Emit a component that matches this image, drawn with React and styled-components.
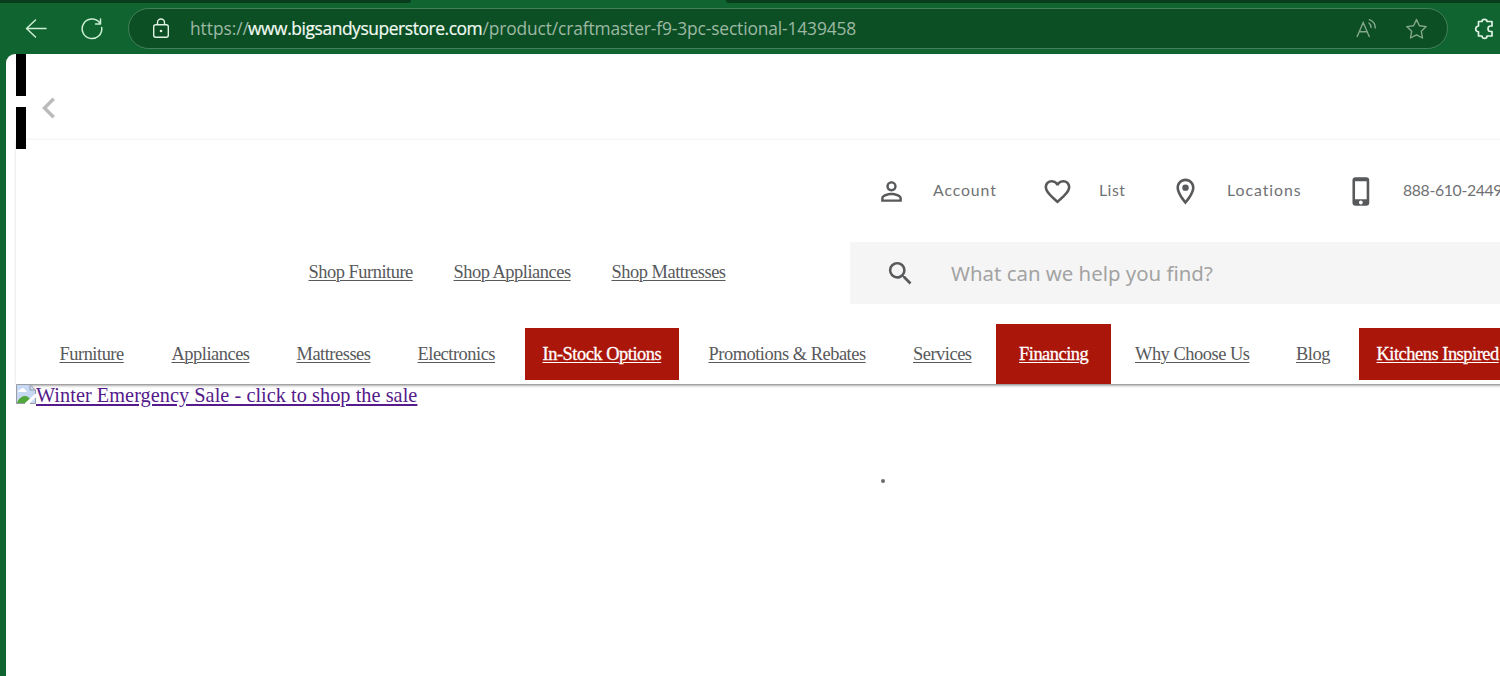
import React from "react";
import styled, { createGlobalStyle } from "styled-components";
import {
  MdChevronLeft,
  MdFavoriteBorder,
  MdOutlineLocationOn,
  MdPersonOutline,
  MdPhoneIphone,
  MdSearch,
} from "react-icons/md";

const GlobalStyle = createGlobalStyle`
  * {
    box-sizing: border-box;
  }
  body {
    margin: 0;
    overflow: hidden;
  }
`;

const Browser = styled.div`
  width: 1500px;
  height: 676px;
  display: flex;
  flex-direction: column;
  overflow: hidden;
  background-color: #0f6430;
`;

const TabStrip = styled.div`
  display: flex;
  justify-content: space-between;
  height: 3px;
  flex: none;
`;
const InactiveTabs = styled.div`
  width: ${({ $width }) => $width}px;
  background-color: #083d1c;
  border-radius: ${({ $right }) => ($right ? "0 0 0 3px" : "0 0 3px 0")};
`;

const Toolbar = styled.div`
  display: flex;
  align-items: center;
  height: 51px;
  flex: none;
  padding-left: 24px;
  color: #cdeed5;
  svg {
    flex: none;
    display: block;
  }
`;
const BackIcon = styled.svg`
  margin-right: 32px;
`;
const ReloadIcon = styled.svg`
  margin-right: 24px;
`;
const AddressBar = styled.div`
  display: flex;
  align-items: center;
  width: 1320px;
  height: 41px;
  flex: none;
  margin-right: 26px;
  padding: 0 19px 0 22px;
  border: 1px solid #44805a;
  border-radius: 21px;
  background-color: #0c4f25;
`;
const Url = styled.div`
  flex: 1;
  display: flex;
  margin: 0 0 2px 19px;
  font-family: "Open Sans", "Noto Sans", sans-serif;
  font-size: 17.4px;
  line-height: 24px;
  color: #9db8a3;
  white-space: pre;
`;
const UrlPart = styled.span`
  width: ${({ $width }) => $width}px;
  letter-spacing: ${({ $spacing }) => $spacing}px;
`;
const Domain = styled(UrlPart)`
  color: #f2fbf3;
  -webkit-text-stroke: 0.2px #f2fbf3;
`;
const ReadAloudIcon = styled.svg`
  margin-right: 28px;
`;

const Page = styled.div`
  flex: 1;
  margin-left: 6px;
  padding-left: 10px;
  border-top-left-radius: 9px;
  background-color: #fff;
`;
const Carousel = styled.div`
  display: flex;
  height: 86px;
`;
const Bars = styled.div`
  position: relative;
  z-index: 1;
  display: flex;
  flex-direction: column;
  gap: 11px;
`;
const Bar = styled.div`
  width: 10px;
  height: 42px;
  flex: none;
  background-color: #000;
`;
const PrevIcon = styled(MdChevronLeft)`
  margin: 33px 0 0 2px;
  color: #bbb;
`;

const SiteHeader = styled.header`
  position: relative;
  width: 1500px;
  height: 244px;
  box-shadow: 0 0 3px rgba(0, 0, 0, 0.1), 0 3px 3px -2px rgba(0, 0, 0, 0.55);
  background-color: #fff;
  color: #58595b;
`;
const AccountLinks = styled.div`
  display: flex;
  align-items: center;
  height: 102px;
  padding-left: 860px;
  svg {
    flex: none;
  }
`;
const AccountText = styled.span`
  width: ${({ $width }) => $width}px;
  margin: 0 ${({ $after }) => $after}px 3px ${({ $before }) => $before}px;
  font-family: "Lato", sans-serif;
  font-size: 15.8px;
  line-height: 20px;
  letter-spacing: ${({ $spacing }) => $spacing}px;
  color: #707174;
  white-space: nowrap;
`;

const ShopRow = styled.div`
  display: flex;
  height: 62px;
  align-items: center;
`;
const MenuRow = styled.nav`
  display: flex;
  height: 60px;
  margin-top: 20px;
  align-items: center;
`;
const NavLink = styled.a`
  flex: none;
  width: ${({ $width }) => $width}px;
  margin-left: ${({ $before }) => $before}px;
  font-family: "Liberation Serif", serif;
  font-size: 18.4px;
  line-height: 22px;
  letter-spacing: -0.47px;
  color: #58595b;
  text-decoration: underline;
  text-underline-offset: 2px;
  text-decoration-thickness: 1px;
  white-space: nowrap;
`;
const ShopLink = styled(NavLink)`
  margin-bottom: 2px;
`;
const Promo = styled.div`
  display: flex;
  align-items: center;
  flex: none;
  width: ${({ $width }) => $width}px;
  height: ${({ $tall }) => ($tall ? 60 : 52)}px;
  margin-left: ${({ $before }) => $before}px;
  padding-left: ${({ $pad }) => $pad}px;
  background-color: #ab160b;
  ${NavLink} {
    color: #fff;
    -webkit-text-stroke: 0.3px #fff;
  }
`;
const SearchBox = styled.div`
  display: flex;
  align-items: center;
  flex: none;
  width: 700px;
  height: 62px;
  margin-left: 124px;
  padding-left: 35px;
  background-color: #f5f5f5;
`;
const Placeholder = styled.span`
  margin: 0 0 1px 35px;
  font-family: "Noto Sans", sans-serif;
  font-size: 20.4px;
  line-height: 28px;
  color: #a3a3a3;
  white-space: nowrap;
`;

const Banner = styled.a`
  display: flex;
  height: 22px;
  font-family: "Liberation Serif", serif;
  font-size: 20.3px;
  line-height: 23px;
  letter-spacing: 0.04px;
  color: #551a8b;
  text-decoration: underline;
  white-space: nowrap;
  svg {
    position: relative;
  }
`;
const LoadingDot = styled.div`
  width: 4px;
  height: 4px;
  margin: 73px 0 0 865px;
  border-radius: 50%;
  background-color: #6b6b6b;
`;

const BrokenImage = () => (
  <svg width="20" height="20" viewBox="0 0 20 20" fill="none">
    <path d="M.5 .5H14L19.5 6V19.5H.5z" fill="#c7d8f5" />
    <path d="M2 8c0-2 2-2 3-3 1-2 4-1 4 1 2 0 2 2 1 2z" fill="#fff" />
    <path d="M1 19c2-5 5-7 8-7 3 0 4 2 5 3l-4 4z" fill="#52a83c" />
    <path d="M8 20L20 9v4l-7 7z" fill="#fff" />
    <path d="M.5 20V.5H14L19.5 6v4M14 .5V6h5.500M1 19.500h8M14 19.500h5.500V14" stroke="#9a9da3" />
  </svg>
);

const App = () => {
  return (
    <>
      <GlobalStyle />
      <Browser>
        <TabStrip>
          <InactiveTabs $width={411} />
          <InactiveTabs $width={774} $right />
        </TabStrip>
        <Toolbar>
          <BackIcon width="24" height="24" viewBox="0 0 24 24" fill="none" stroke="currentColor" strokeWidth="1.5" strokeLinecap="round" strokeLinejoin="round">
            <path d="M22 11.500H2.500M11.500 3L2.500 11.500L11.500 20" />
          </BackIcon>
          <ReloadIcon width="24" height="24" viewBox="0 0 24 24" fill="none" stroke="currentColor" strokeWidth="1.5" strokeLinecap="round" strokeLinejoin="round">
            <path d="M21.700 10.500A9.800 9.800 0 1 1 19.500 5.500M20.500 2V7H15.500" />
          </ReloadIcon>
          <AddressBar>
            <svg width="20" height="24" viewBox="0 0 20 24" fill="none" stroke="#e0f3e3" strokeWidth="1.400">
              <rect x="2.700" y="7.700" width="14.600" height="12.600" rx="2" />
              <path d="M6.500 7.700V5.500a3.500 3.500 0 0 1 7 0v2.200" />
              <circle cx="10" cy="14" r="1.300" fill="#e0f3e3" stroke="none" />
            </svg>
            <Url>
              <UrlPart $width={58} $spacing={-0.05}>https://</UrlPart>
              <Domain $width={234.5} $spacing={-0.42}>www.bigsandysuperstore.com</Domain>
              <UrlPart $width={375} $spacing={-0.14}>/product/craftmaster-f9-3pc-sectional-1439458</UrlPart>
            </Url>
            <ReadAloudIcon width="22" height="22" viewBox="0 0 22 22" fill="none" stroke="#84a78d" strokeWidth="1.400" strokeLinecap="round">
              <path d="M1.200 18.500L7.200 4.500L13.200 18.500M3.200 13.800H11.200M13 5Q15 6.500 15 9.500M13.300 1.700Q19.500 4 19.200 10" />
            </ReadAloudIcon>
            <svg width="22" height="22" viewBox="0 0 22 22" fill="none" stroke="#84a78d" strokeWidth="1.400" strokeLinejoin="round">
              <path d="M10.500 1.500L13.400 7.700L20.200 8.600L15.300 13.300L16.500 20L10.500 16.800L4.500 20L5.700 13.300L.8 8.600L7.600 7.700Z" />
            </svg>
          </AddressBar>
          <svg width="22" height="22" viewBox="0 0 22 22" fill="none" stroke="#e0f3e3" strokeWidth="1.700" strokeLinejoin="round">
            <path d="M4.500 3.500H8C8 .7 13 .7 13 3.500H18V8H16.500C13.200 8 13.200 13.500 16.500 13.500H18V18H13C13 21.200 8 21.200 8 18H4.500V13.800C.8 13.500 .8 8.500 4.500 8Z" />
          </svg>
        </Toolbar>
        <Page>
          <Carousel>
            <Bars>
              <Bar />
              <Bar />
            </Bars>
            <PrevIcon size={42} />
          </Carousel>
          <SiteHeader>
            <AccountLinks>
              <MdPersonOutline size={31} />
              <AccountText $width={64} $before={26} $after={45} $spacing={0.9}>Account</AccountText>
              <MdFavoriteBorder size={31} />
              <AccountText $width={27} $before={26} $after={44} $spacing={0.5}>List</AccountText>
              <MdOutlineLocationOn size={31} />
              <AccountText $width={75} $before={26} $after={44} $spacing={0.98}>Locations</AccountText>
              <MdPhoneIphone size={31} />
              <AccountText $width={110} $before={26} $after={0} $spacing={-0.35}>888-610-2449</AccountText>
            </AccountLinks>
            <ShopRow>
              <ShopLink $before={292.5} $width={104}>Shop Furniture</ShopLink>
              <ShopLink $before={41} $width={117}>Shop Appliances</ShopLink>
              <ShopLink $before={41} $width={114.5}>Shop Mattresses</ShopLink>
              <SearchBox>
                <MdSearch size={31} />
                <Placeholder>What can we help you find?</Placeholder>
              </SearchBox>
            </ShopRow>
            <MenuRow>
              <NavLink $before={43.5} $width={65}>Furniture</NavLink>
              <NavLink $before={47} $width={78}>Appliances</NavLink>
              <NavLink $before={47} $width={74}>Mattresses</NavLink>
              <NavLink $before={47} $width={78.5}>Electronics</NavLink>
              <Promo $before={29} $width={154} $pad={17.5}>
                <NavLink $before={0} $width={119}>In-Stock Options</NavLink>
              </Promo>
              <NavLink $before={29.5} $width={157.5}>Promotions &amp; Rebates</NavLink>
              <NavLink $before={47} $width={58}>Services</NavLink>
              <Promo $before={25} $width={115} $pad={23} $tall>
                <NavLink $before={0} $width={69}>Financing</NavLink>
              </Promo>
              <NavLink $before={24} $width={114}>Why Choose Us</NavLink>
              <NavLink $before={47} $width={34}>Blog</NavLink>
              <Promo $before={29} $width={170} $pad={17.5}>
                <NavLink $before={0} $width={140}>Kitchens Inspired</NavLink>
              </Promo>
            </MenuRow>
          </SiteHeader>
          <Banner>
            <BrokenImage />
            Winter Emergency Sale - click to shop the sale
          </Banner>
          <LoadingDot />
        </Page>
      </Browser>
    </>
  );
};

export default App;
